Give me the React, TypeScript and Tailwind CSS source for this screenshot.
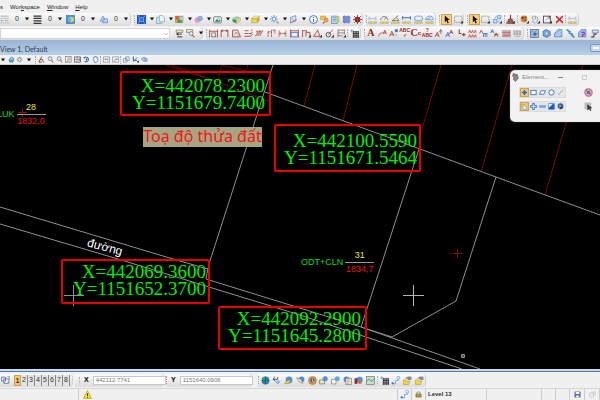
import { useState } from 'react';
import type { ReactNode } from 'react';
import clsx from 'clsx';

const BLUE = '#2f6fd0';
const SKY = '#8fc1f0';
const RED = '#b03a3a';
const DARK = '#333333';
const YELLOW = '#e8c53a';

const ruler = <path d="M1 12h14v3H1z" fill="#d9cf6a" stroke="#8a8240" strokeDasharray="1 1.5" />;
const dropMark = <path d="M11 15h5v-5z" fill={DARK} />;

// 16x16 drawings for the tool buttons
const icons: Record<string, ReactNode> = {
  'Line style': <path d="M1 2h14M1 6h3m2 0h4m2 0h3M1 10h5m3 0h6M1 14h2m2 0h2m2 0h2m2 0h2" stroke="#777" />,
  'Line weight': <path d="M1 2h14M1 6h14M1 10.500h14M1 15h14" stroke="#333" strokeWidth="2.4" />,
  'Color': <><rect x="1" y="1" width="14" height="14" fill="#4a90d9" stroke="#2b5fa0" /><circle cx="9" cy="8" r="5" fill="#f3cf4b" /><path d="M5 3c4 0 6 4 3 10-4-1-6-6-3-10" fill="#46c7ee" /></>,
  'Transparency': <><path d="M7 2l5 9H2z" fill="#cfe3fa" stroke={BLUE} /><rect x="7" y="7" width="8" height="7" fill="#bcd7f7" fillOpacity=".7" stroke={BLUE} /></>,
  'Models': <><rect x="0" y="0" width="16" height="16" fill="#1d56c8" /><rect x="4" y="5" width="8" height="7" fill="#2d6be0" stroke="#9cc4ff" /><path d="M2 2h2M12 2h2M2 14h2M12 14h2" stroke="#fff" /></>,
  'References': <><path d="M1 4h9v11H1z" fill="#cfeaf2" stroke="#5b8fa5" /><path d="M6 1h6l3 3v8H6z" fill="#eaf6fb" stroke="#6a8fa0" /></>,
  'Raster': <><rect x="1" y="2" width="13" height="11" fill="#f0a04a" stroke="#8a7a50" /><path d="M1 2h6v6H1z" fill="#e4573d" /><path d="M4 8h8v6H4z" fill="#4aa04a" /><path d="M9 3h6v6H9z" fill="#9ad0f0" /></>,
  'Point cloud': <><circle cx="6" cy="9" r="5" fill="#dba2cf" /><circle cx="11" cy="6" r="4" fill="#8fb4ea" stroke="#7a77b5" /></>,
  'Saved views': <><rect x="1" y="3" width="14" height="11" rx="2" fill="#e8eef2" stroke="#444" /><path d="M3 12l4-5 3 3 3-2v4z" fill="#2f8a4a" /><circle cx="10" cy="6" r="2" fill={SKY} /></>,
  'Levels': <><path d="M1 5l8-3 6 3-7 3z" fill="#8fd48a" /><path d="M1 6l7 3v6l-7-3z" fill="#2f9a4a" /><path d="M8 9l7-4v6l-7 4z" fill="#e8d28a" stroke="#999" strokeWidth=".6" /></>,
  'Cells': <><path d="M1 6l5-4h9l-4 4z" fill="#fff0a0" stroke="#a08a30" strokeWidth=".7" /><path d="M1 6h10v8H1z" fill="#ecd457" stroke="#a08a30" strokeWidth=".7" /><path d="M11 6l4-4v8l-4 4z" fill="#c7a933" /></>,
  'AccuDraw': <><path d="M7 0v14M0 7h14M2 2l10 10M12 2L2 12" stroke="#5f9fe6" strokeWidth="1.6" /><circle cx="7" cy="7" r="3" fill="#fff" stroke={BLUE} /><path d="M12 12l3 3" stroke="#b8862f" strokeWidth="2" /></>,
  'Auxiliary': <><path d="M3 4l9-3v9l-9 4z" fill="#dbe9fb" stroke={BLUE} /><path d="M2 14L14 8M5 6l6 6" stroke={RED} /></>,
  'Information': <><circle cx="8" cy="8" r="7" fill="#fff" stroke={BLUE} strokeWidth="1.6" /><path d="M8 7v5M8 3.500v2" stroke={BLUE} strokeWidth="2" /></>,
  'Find': <><path d="M1 2h9v6H1z" fill="#f5c742" stroke="#c08d20" /><circle cx="11" cy="9" r="3.500" fill="#f7a93c" stroke="#b8662a" /><path d="M8 12l-3 3" stroke="#a05a20" strokeWidth="2" /></>,
  'Properties': <><path d="M1 2h10v13H1z" fill="#cfe1f5" stroke="#557" /><path d="M3 5h6M3 8h6M3 11h6" stroke={BLUE} /><path d="M11 2h4v12h-4z" fill="#b6cf5a" /></>,
  'Details': <><path d="M5 0v16M11 0v16M0 5h16M0 11h16" stroke="#8a7ab0" /><rect x="3" y="3" width="10" height="10" fill="#6c8ee0" stroke="#5b5b9a" /></>,
  'Popset': <><circle cx="8" cy="8" r="5" fill="#5a2a2a" /><path d="M2 2l12 12M14 2L2 14M8 0v16M0 8h16" stroke="#a8322f" strokeWidth="1.600" /></>,
  'Distance': <><path d="M2 6h12M2 3v6M14 3v6" stroke="#4f8be0" strokeDasharray="3 1" />{ruler}</>,
  'Radius': <><path d="M1 9c2-8 10-9 13 0M8 8l4-5" stroke={DARK} fill="none" />{ruler}</>,
  'Angle': <><path d="M13 1L2 10h12M9 5c3 1 4 3 4 5" stroke={DARK} fill="none" />{ruler}</>,
  'Length': <><path d="M1 5h14M1 2v6M15 2v6" stroke={BLUE} strokeWidth="1.800" />{ruler}</>,
  'Area': <><rect x="1" y="2" width="14" height="8" rx="3" fill="#e4efff" stroke={BLUE} />{ruler}</>,
  'Volume': <><path d="M1 8c0-4 6-7 9-6s6 3 4 7z" fill="#e4efff" stroke={BLUE} /><path d="M3 8l8-4" stroke={BLUE} />{ruler}</>,
  'Element selection': <path d="M5 1v12l3-3 2 5 2-1-2-5h4z" fill="#111" />,
  'Fence': <><path d="M1 2h13v11H1z" fill="none" stroke="#555" strokeDasharray="2 1" />{dropMark}</>,
  'Manipulate': <><path d="M8 1h6v5H8zM1 8h6v6H1z" fill="#cfe1fa" stroke={BLUE} /><path d="M6 2L3 6M13 8l-4 4" stroke={BLUE} />{dropMark}</>,
  'Drop': <><path d="M7 0h2v7H7z" fill="#8a3030" /><path d="M5 7h6l3 8H1z" fill="#9c5a5a" stroke="#633" />{dropMark}</>,
  'Change attributes': <><circle cx="7" cy="7" r="6" fill="#d9822b" /><circle cx="5" cy="5" r="1.800" fill="#5a2a10" /><circle cx="9" cy="9" r="2" fill="#3a8a3a" /><circle cx="10" cy="4" r="1.800" fill="#e03030" />{dropMark}</>,
  'Groups': <><path d="M2 2h6v5H2z" fill="#e9e2b0" stroke="#998" /><path d="M8 3c6 0 5 8 1 10M3 9c0 3 2 5 5 5" stroke={BLUE} fill="none" />{dropMark}</>,
  'Modify': <><rect x="1" y="2" width="12" height="12" fill="#f4f4f4" stroke="#444" strokeWidth="1.500" /><path d="M5 10l7-7M8 3h4v4" stroke="#444" fill="none" />{dropMark}</>,
  'Delete': <path d="M2 2l12 12M14 2L2 14" stroke="#d8232a" strokeWidth="2.600" />,

  'Match': <><path d="M2 2h12v4H2z" fill="#f3eec0" stroke="#555" /><path d="M3 9h9M3 9l3-2M3 9l3 2M4 14h9" stroke="#222" strokeWidth="1.600" fill="none" /></>,
  'Change text': <><path d="M1 1h11v5H1z" fill="#f3eec0" stroke="#555" /><circle cx="9" cy="8" r="3.500" fill="#d7e9fa" stroke="#555" /><path d="M11 11l4 4" stroke="#a66b2a" strokeWidth="2" /></>,
  'Dimension element': <><path d="M1 1v14M15 1v14M1 4h14" stroke={RED} strokeWidth="1.500" /><rect x="5" y="7" width="7" height="7" fill="none" stroke="#444" /></>,
  'Linear dimension': <path d="M2 2v12M14 2v12M2 3h12M5 1L2 3l3 2M11 1l3 2-3 2" stroke={RED} strokeWidth="1.500" fill="none" />,
  'Angular dimension': <><path d="M1 2h9l5 12H1z" fill="none" stroke={RED} strokeWidth="1.500" /><path d="M4 5l8 7M3 11c2-4 5-5 8-4" stroke="#776" fill="none" /></>,
  'Ordinate': <path d="M1 3h7M1 8h7M1 13h9M12 3l3-2M9 8h4l2-3M10 13c3 0 4-2 5-4" stroke={RED} strokeWidth="1.500" fill="none" />,
  'Chamfer': <path d="M1 13L5 4v8l4-9v9l5-10M2 4h12" stroke={RED} strokeWidth="1.400" fill="none" strokeDasharray="4 1" />,
  'Perpendicular': <path d="M1 5h7V2h7M2 5v9M8 5v9M14 2v7" stroke={RED} strokeWidth="1.400" fill="none" strokeDasharray="5 1" />,
  'Size dimension': <path d="M2 2v12M14 2v12M2 8h12M5 6L2 8l3 2M11 6l3 2-3 2" stroke={RED} fill="none" />,
  'Box dimension': <><path d="M1 1v14M15 1v14M1 3h14" stroke={RED} strokeWidth="1.400" /><path d="M2 6h12v8H2z" fill="#e5eefc" stroke="#4e6fb0" strokeWidth="1.500" /></>,
  'Chain dimension': <><path d="M1 2v12M7 5v8M1 3h7v3h6v7" stroke={RED} strokeWidth="1.500" fill="none" />{dropMark}</>,
  'Angle size': <><path d="M9 1L1 13h12M8 2l4 10" stroke={RED} strokeWidth="1.500" fill="none" />{dropMark}</>,
  'Diameter': <><circle cx="6" cy="10" r="4" fill="none" stroke="#444" strokeWidth="1.500" /><path d="M6 10l8-9" stroke={RED} strokeWidth="1.500" />{dropMark}</>,
  'Label line': <><path d="M1 2h13M1 7h13M1 12h9M2 1v13M13 1v9" stroke="#866" strokeWidth="1.300" />{dropMark}</>,
  'Pattern': <><path d="M5 5h11M5 8h11M5 11h11M5 14h11M6 4v12M9 4v12M12 4v12M15 4v12" stroke="#222" strokeWidth="1.300" /><path d="M1 3h5M3 1v5" stroke={BLUE} /></>,
  'Note': <><path d="M1 13c3-9 4-3 7-7" stroke={RED} fill="none" strokeWidth="1.500" /><path d="M9 9l3-7 3 7M10 7h4" stroke={RED} fill="none" strokeWidth="1.500" /></>,
  'Edit text': <><path d="M1 13l4-9 4 9M3 10h5" stroke={RED} fill="none" strokeWidth="1.500" /><path d="M11 1h4v4h-4zM11 8l3 4" fill={BLUE} stroke={BLUE} /></>,
  'Display text attributes': <><path d="M2 14L6 6l3 8M4 11h4" stroke={RED} fill="none" strokeWidth="1.500" /><path d="M9 6l3-5 3 5M12 1v8" stroke="#444" fill="none" /></>,
  'Match text': <><path d="M1 14l4-8 3 8M3 11h4" stroke={BLUE} fill="none" strokeWidth="1.500" /><path d="M8 9l3-7 3 7M9 6h4" stroke={RED} fill="none" strokeWidth="1.500" /></>,
  'Increment': <path d="M4 1v7h4M9 10h6M12 7v6" stroke={RED} strokeWidth="2" fill="none" />,
  'Copy increment': <path d="M1 7l2-5 2 5M6 7l2-5 2 5M11 7l2-5 2 5M1 15l2-5 2 5M6 15l2-5 2 5M11 15l2-5 2 5" stroke={RED} fill="none" strokeWidth="1.300" />,
  'Enter data': <><path d="M1 8l3-6 3 6" stroke={RED} fill="none" strokeWidth="1.500" /><path d="M8 8v6M11 8v6M14 8v6M8 8h7" stroke={BLUE} strokeWidth="1.500" /></>,
  'Copy data': <><path d="M1 7l3-6 3 6M2 5h4" stroke={BLUE} fill="none" strokeWidth="1.500" /><path d="M8 14l3-7 3 7M7 10h8" stroke={RED} fill="none" strokeWidth="1.500" /></>,
  'Fill data': <><rect x="1" y="3" width="14" height="11" fill="#d9b0b0" stroke="#999" /><path d="M1 6h14M3 9h3M7 9h3M11 9h3M2 12h12" stroke={RED} /></>,
  'Auto fill': <path d="M1 3h3v3H1zM6 3h3v3H6zM11 3h3v3h-3zM1 8h3v2H1zM6 8h3v2H6zM11 8h3v2h-3zM3 13h10" fill="#ddd" stroke="#888" />,
  'Create region': <><rect x="1" y="1" width="14" height="14" fill="#9cc3ea" stroke="#446" /><path d="M2 6l5-4M2 12L12 2M6 14l8-8" stroke={BLUE} /><circle cx="9" cy="9" r="3" fill="#567" /></>,
  'Hatch area': <><path d="M2 4l5-3 7 3 1 7-6 4-7-3z" fill="#6fb0ee" stroke="#346" /><circle cx="8" cy="8" r="3" fill="#cfe5fa" stroke={BLUE} /></>,
  'Cross hatch': <><path d="M1 14V8l6-7h7v13z" fill="#94c2f2" stroke="#3c6aa8" /><path d="M3 13L13 3M8 13l5-5" stroke="#e6f1fd" /></>,
  'Linear pattern': <path d="M1 1l6 4-1 2 5 2-1 2 5 4" stroke="#3d93e0" strokeWidth="3" fill="none" />,
  'Pattern area': <><path d="M1 14V6l5-5h8v13z" fill="#94c2f2" stroke="#3c6aa8" /><path d="M6 6h5v4H8v4" stroke="#b12cc0" strokeWidth="2" fill="none" /></>,
  'Show pattern': <><path d="M4 2h11v5H4z" fill="#cfe5fa" stroke="#447" /><path d="M2 14h5V9h5" stroke="#446" strokeWidth="2" fill="none" /></>,

  'Update view': <path d="M9 1l-4 7h5l3 7M5 8l-3 6h7" stroke="#8a3a3a" strokeWidth="2" fill="none" />,
  'Zoom in': <><circle cx="7" cy="6" r="4.500" fill="#dcebfa" stroke="#667" strokeWidth="1.500" /><path d="M10 9l4 6" stroke="#b8742c" strokeWidth="2.500" /></>,
  'Window area': <><rect x="1" y="1" width="13" height="13" fill="#f6f0dd" stroke="#777" strokeWidth="1.500" /><circle cx="9" cy="7" r="3" fill="#dcebfa" stroke={BLUE} /><path d="M7 10l-3 4" stroke="#b8742c" strokeWidth="2" /></>,
  'Fit view': <><path d="M1 2h14v12H1z" fill="#f2f2f2" stroke="#445" strokeWidth="1.600" /><path d="M1 8h14M7 2v12M10 5h3v6h-3" stroke="#445" fill="none" /></>,
  'Rotate view': <><path d="M3 4c4-4 11 0 9 6-2 4-6 4-8 2" stroke={BLUE} strokeWidth="2.500" fill="none" /><path d="M0 3l6-1-2 5z" fill={BLUE} /><path d="M7 5l3 3-3 4z" fill="#27407a" /></>,
  'Pan view': <path d="M3 8V4h2V2h2V1h2v1h2v2h2v7l-3 4H6z" fill="#f4f8ff" stroke={BLUE} strokeWidth="1.600" />,
  'View previous': <><path d="M1 2h14v12H1z" fill="#f7f7f7" stroke="#778" strokeWidth="1.400" /><path d="M4 8h5M4 8l3-3M11 5v6" stroke="#556" strokeWidth="1.400" /></>,
  'View next': <><path d="M1 2h14v12H1z" fill="#f7f7f7" stroke="#778" strokeWidth="1.400" /><path d="M12 8H7M12 8L9 5M4 11h4" stroke="#556" strokeWidth="1.400" /></>,
  'Copy view': <><path d="M1 6h8v8H1zM6 2h8v8H6z" fill="#eef3fa" stroke="#66788f" strokeWidth="1.400" /></>,
  'Clip volume': <><path d="M3 1v9h8" stroke="#27407a" strokeWidth="2" fill="none" /><path d="M3 13L12 3M9 9l5 5" stroke={BLUE} strokeWidth="2" />{dropMark}</>,
  'Clip mask': <><path d="M2 4h8l4 3v5H6L2 9z" fill="#dce8f8" stroke="#56749c" strokeWidth="1.400" /><circle cx="9" cy="8" r="3" fill="#a5c8f0" stroke={BLUE} /></>,
  'Display style': <><path d="M2 9l6-7 6 4-3 8H4z" fill="#4f9fe0" stroke="#2f5f90" /><path d="M5 8l4-4 3 3z" fill="#d8ecfb" /></>,
  'View attributes': <><circle cx="8" cy="8" r="4" fill="#e7f0f2" stroke="#555" strokeWidth="1.500" /><path d="M8 1v3M8 12v3M1 8h3M12 8h3M3 3l2 2M13 3l-2 2M3 13l2-2M13 13l-2-2" stroke="#689" /></>,

  'Individual': <><path d="M8 2v12M2 8h12" stroke={BLUE} strokeWidth="3" /><rect x="5" y="5" width="6" height="6" fill={BLUE} /></>,
  'Block': <rect x="2" y="3" width="12" height="10" fill="#fff" stroke={BLUE} strokeWidth="2" />,
  'Shape': <path d="M5 4h10l-4 8H1z" fill="#fff" stroke={BLUE} strokeWidth="2" />,
  'Circle': <circle cx="8" cy="8" r="6" fill="#fff" stroke={BLUE} strokeWidth="2" />,
  'Line': <path d="M2 14L14 2" stroke="#888" strokeWidth="1.500" />,
  'New set': <><path d="M2 3h6v5H2z" fill="#f8e5b0" stroke="#a77b30" /><path d="M5 14l-3-5 3-1 2-4 3 3 4 1-2 7z" fill="#e8eff5" stroke="#678" /></>,
  'Add': <path d="M6 1h4v5h5v4h-5v5H6v-5H1V6h5z" fill="#d5e7fb" stroke={BLUE} strokeWidth="2" />,
  'Subtract': <path d="M1 6h14v4H1z" fill="#80b3f0" stroke={BLUE} />,
  'Invert': <><rect x="1" y="1" width="14" height="14" fill="#1759c8" /><path d="M2 2h9l-9 9z" fill="#f3f8ff" /></>,
  'Clear': <><circle cx="8" cy="7" r="6" fill="#356ba8" stroke="#223" /><path d="M6 3l3 5-3 3z" fill="#e4eefa" /><path d="M8 8v7l3-3h4z" fill="#123" /></>,
  'Disable handles': <><circle cx="8" cy="8" r="6.500" fill="#b7cdea" stroke="#d66060" strokeWidth="2" /><path d="M5 5h6v6H5z" fill={BLUE} /><path d="M3 3l10 10" stroke="#d66060" strokeWidth="2" /></>,
  'Select all': <><rect x="1" y="1" width="12" height="12" fill="#bbb" /><path d="M6 4v11l3-3 2 4 2-1-2-4h4z" fill="#333" /></>,
  'Panel grip': <path d="M4 1l7 2 2 6-5 6-4-4 2-3-3-2z" fill="#888" stroke="#444" />,

  'View groups': <><path d="M1 2h7v7H1zM5 5h9v8H5z" fill="#e9eef8" stroke="#5a6a9a" strokeWidth="1.400" /><path d="M11 1h4v4" stroke="#5a6a9a" fill="none" /></>,
  'Globe': <><circle cx="8" cy="8" r="7" fill="#2f78d8" /><path d="M3 3l5-2 1 5-4 4-3-3zM10 6l4 1-2 6-3-2z" fill="#28b050" /><path d="M1 8h14M8 1v14" stroke="#134" strokeWidth=".8" /></>,
  'Place mark': <><path d="M2 6h8V2M5 1L2 6l4 3" stroke="#445" strokeWidth="1.500" fill="none" /><path d="M6 10l5-3 4 3-5 5z" fill="#8eb8ec" /></>,
  'Export': <><circle cx="9" cy="7" r="6" fill="#4f8fdb" /><path d="M1 14l5-6 6-1-3 6z" fill="#eed655" stroke="#9a8226" /></>,
  'Capture': <><circle cx="10" cy="6" r="5" fill="#4f8fdb" /><path d="M1 3l8 3 3 7-6-2z" fill="#eee7c0" stroke="#777" /></>,
  'Sync': <><circle cx="8" cy="8" r="7" fill="#ee9b33" stroke="#a35d14" /><circle cx="8" cy="8" r="4" fill="#3567a8" /><path d="M8 5v5h3" stroke="#fff" fill="none" /></>,
  'Open map': <><path d="M1 7h9v7H1z" fill="#f5e6a5" stroke="#555" /><circle cx="11" cy="5" r="4.500" fill="#4f8fdb" /><path d="M3 6l4-4v3z" fill="#eed655" /></>,
  'Send map': <><path d="M1 6h8v8H1z" fill="#fff" stroke="#555" /><circle cx="11" cy="5" r="4.500" fill="#64a4e6" /><path d="M7 11l6-1-3 4z" fill="#eed655" /></>,
  'Map report': <><circle cx="6" cy="6" r="5" fill="#4f8fdb" /><path d="M5 4h10v11H5z" fill="#fff6d5" stroke="#555" /><path d="M7 7h6M7 10h6M7 13h4" stroke="#777" /></>,
  'Map tour': <><circle cx="10" cy="7" r="5.500" fill="#4f8fdb" /><path d="M1 4h5v10H1z" fill="#8a3030" /><path d="M8 8h5v6H8z" fill="#d5712f" /></>,
  'Map sheet': <><rect x="1" y="1" width="14" height="14" fill="#c8dfb8" stroke="#567" /><path d="M1 10l5-5 4 5 5-6" stroke="#4a7fc0" strokeWidth="1.500" fill="none" /></>,
  'Nodes': <><path d="M3 14h5V8h5V3" stroke="#7aa7e4" strokeWidth="1.600" fill="none" /><circle cx="3" cy="13" r="2" fill={BLUE} /><circle cx="13" cy="3" r="2.500" fill="#fff" stroke={BLUE} /></>,
  'Folder': <><path d="M1 7h4l1 2h6l-2 6H1z" fill="#f6d83f" stroke="#b1922a" /><path d="M8 1h7v6H8z" fill="#888" /><path d="M5 5l3-3" stroke="#333" strokeWidth="1.500" /></>,
  'Warning': <><path d="M8 1l7 14H1z" fill="#f9dd1c" stroke="#a89000" /><path d="M8 6v5M8 12.500v1.500" stroke="#222" strokeWidth="1.600" /></>,
  'Lock': <><path d="M4 8V5c0-4 8-4 8 0v3" fill="none" stroke="#777" strokeWidth="2" /><path d="M2 7h12v7H2z" fill="#b09e2b" stroke="#5f5618" /></>,
  'Save': <><rect x="1" y="1" width="14" height="14" rx="1" fill="#65719c" /><path d="M4 2h8v5H4zM5 10h6v5H5z" fill="#f3f4fa" /></>,
  'Fence state': <path d="M2 4h8v10H2zM10 2h4v6h-4" fill="none" stroke="#aaa" strokeWidth="1.500" strokeDasharray="3 1" />,
};

function Icon({ name, small }: { name: string; small?: boolean }) {
  return (
    <svg viewBox="0 0 16 16" fill={YELLOW} aria-hidden="true" className={clsx('shrink-0', small ? 'size-[7px]' : 'size-[9px]')}>
      {icons[name]}
    </svg>
  );
}

function Tool({ name, small, active }: { name: string; small?: boolean; active?: boolean }) {
  return (
    <button
      type="button"
      aria-label={name}
      className={clsx(
        'flex shrink-0 items-center justify-center',
        small ? 'size-2' : 'size-[11px]',
        active && 'border border-[#c9a25b] bg-[#fbcf7e]'
      )}
    >
      <Icon name={name} small={small} />
    </button>
  );
}

function Caret() {
  return (
    <svg viewBox="0 0 8 8" aria-hidden="true" className="size-1 shrink-0">
      <path d="M0 1h8L4 7z" fill="#111" />
    </svg>
  );
}

function DropTool({ name, small }: { name: string; small?: boolean }) {
  return (
    <button type="button" aria-haspopup="menu" aria-label={name} className={clsx('flex shrink-0 items-center gap-1', small ? 'w-[18px]' : 'w-[19px]')}>
      <Icon name={name} small={small} />
      <Caret />
    </button>
  );
}

function AttributePicker({ name }: { name: string }) {
  return (
    <button type="button" aria-haspopup="listbox" aria-label={name} className="flex w-[33px] shrink-0 items-center justify-between pr-1">
      <Icon name={name} />
      <span>0</span>
      <Caret />
    </button>
  );
}

function Group({ children, className }: { children: ReactNode; className?: string }) {
  return (
    <div role="toolbar" className={clsx('flex h-[13px] shrink-0 items-center rounded-r-sm border-r border-[#cfcfcf] bg-linear-to-b from-[#fbfbfb] to-[#dcdcdc]', className)}>
      {children}
    </div>
  );
}

function Grip() {
  return <span className="h-2 w-0 shrink-0 border-l border-dotted border-[#a8a8a8]" />;
}

const mainTools = ['Models', 'References', 'Raster', 'Point cloud', 'Saved views', 'Levels', 'Cells', 'AccuDraw', 'Auxiliary'];
const infoTools = ['Information', 'Find', 'Properties', 'Details', 'Popset'];
const measureTools = ['Distance', 'Radius', 'Angle', 'Length', 'Area', 'Volume'];
const dimensionTools = ['Dimension element', 'Linear dimension', 'Angular dimension', 'Ordinate', 'Chamfer', 'Perpendicular', 'Size dimension', 'Box dimension', 'Chain dimension', 'Angle size', 'Diameter', 'Label line'];
const patternTools = ['Create region', 'Hatch area', 'Cross hatch', 'Linear pattern', 'Pattern area', 'Show pattern', 'Cross hatch'];
const mapTools = ['Globe', 'Place mark', 'Export', 'Capture', 'Sync', 'Open map', 'Send map', 'Map report', 'Map tour', 'Map sheet'];

function Letters({ label, children }: { label: string; children: ReactNode }) {
  return (
    <button type="button" aria-label={label} className="flex w-[11px] shrink-0 items-center justify-center font-bold text-[#a01c1c]">
      {children}
    </button>
  );
}

function TopToolbars() {
  return (
    <header className="bg-[#f0f0f0]">
      <nav className="flex h-3 items-center gap-[7px] pt-0.5 text-[6px] text-[#222]">
        <button type="button">s</button>
        <button type="button">Wor<u>k</u>space</button>
        <button type="button"><u>W</u>indow</button>
        <button type="button"><u>H</u>elp</button>
      </nav>

      <div className="flex h-[14px] items-center gap-[3px] overflow-hidden text-[7px] text-[#333]">
        <Group className="w-[131px]">
          <AttributePicker name="Line style" />
          <AttributePicker name="Line weight" />
          <AttributePicker name="Color" />
          <AttributePicker name="Transparency" />
        </Group>
        <Group className="w-[229px]">
          <Grip />
          <div className="ml-0.5 flex">
            {mainTools.map(name => <DropTool key={name} name={name} />)}
          </div>
          {infoTools.map(name => <Tool key={name} name={name} />)}
        </Group>
        <Group className="w-[70px] justify-between">
          <Grip />
          {measureTools.map(name => <Tool key={name} name={name} />)}
        </Group>
        <Group className="w-[25px] gap-px">
          <Grip />
          <Tool name="Element selection" active />
          <Tool name="Fence" />
        </Group>
        <Group className="w-[112px] justify-between">
          <Grip />
          <Tool name="Element selection" active />
          <Tool name="Fence" />
          <Tool name="Manipulate" />
          <Grip />
          <Tool name="Drop" />
          <Grip />
          <Tool name="Change attributes" />
          <Tool name="Groups" />
          <Tool name="Modify" />
          <Tool name="Delete" />
          <Grip />
          <Tool name="Distance" />
        </Group>
      </div>

      <div className="flex h-[14px] items-center gap-[3px] overflow-hidden text-[6px]">
        <Group className="w-[203px]">
          <div className="relative flex">
            <select aria-label="Text style" className="h-[11px] w-[170px] appearance-none border border-[#d4d4d4] bg-white" />
            <svg viewBox="0 0 8 8" className="pointer-events-none absolute top-1 right-0.5 size-1">
              <path d="M0 2l4 4 4-4" fill="none" stroke="#888" />
            </svg>
          </div>
          <div className="ml-1 flex gap-px">
            <Tool name="Match" />
            <DropTool name="Change text" />
          </div>
        </Group>
        <Group className="w-[155px] justify-between">
          <Grip />
          {dimensionTools.map(name => <Tool key={name} name={name} />)}
          <Grip />
          <Tool name="Pattern" />
        </Group>
        <Group className="w-[160px] justify-between">
          <Grip />
          <Letters label="Place text"><span className="font-['Liberation_Serif',serif] text-[10px] leading-none">A</span></Letters>
          <Tool name="Note" />
          <Tool name="Edit text" />
          <Letters label="Spell checker"><span className="text-[5px] leading-none">ABC<br />✓</span></Letters>
          <Letters label="Change case"><span className="font-['Liberation_Serif',serif] text-[10px] leading-none">C</span><span>c</span></Letters>
          <Letters label="Display attributes"><span className="text-[5px] leading-none">?<br />ABC</span></Letters>
          <Tool name="Display text attributes" />
          <Tool name="Match text" />
          <Tool name="Increment" />
          <Tool name="Copy increment" />
          <Tool name="Enter data" />
          <Tool name="Copy data" />
          <Tool name="Fill data" />
          <Tool name="Auto fill" />
        </Group>
        <Group className="gap-px">
          <Grip />
          {patternTools.map((name, i) => <Tool key={i} name={name} />)}
        </Group>
      </div>
    </header>
  );
}

function ViewHeader() {
  return (
    <>
      <div className="flex h-[15px] items-center justify-between bg-linear-to-b from-[#98b4d2] to-[#b8d0ea] font-['Lato',sans-serif] text-[7px] text-[#2b3a4c]">
        <h1 className="pt-1">View 1, Default</h1>
        <button type="button" aria-label="Minimize" className="flex h-2 w-2.5 items-center justify-center rounded-l-xs border border-r-0 border-[#8199b5] bg-[#c3d6ea]">
          <span className="h-0.5 w-1.5 bg-white" />
        </button>
      </div>
      <div role="toolbar" className="flex h-[10px] items-center gap-px overflow-hidden border-b border-[#ccc] bg-[#f0f0f0]">
        <span className="flex w-1.5 pl-px"><Caret /></span>
        <Tool name="Display style" small />
        <DropTool name="View attributes" small />
        <Grip />
        <Tool name="Update view" small />
        <Tool name="Zoom in" small />
        <Tool name="Zoom in" small />
        <Tool name="Window area" small />
        <Tool name="Fit view" small />
        <Tool name="Rotate view" small />
        <Tool name="Pan view" small />
        <Grip />
        <Tool name="View previous" small />
        <Tool name="View next" small />
        <Grip />
        <Tool name="Copy view" small />
        <Tool name="Clip volume" small />
        <Tool name="Clip mask" small />
      </div>
    </>
  );
}

const coordinates = [
  { x: 'X=442078.2300', y: 'Y=1151679.7400', place: 'left-[120px] top-[6px]', box: 'w-[151px] h-[45px] pt-1 pr-1' },
  { x: 'X=442100.5590', y: 'Y=1151671.5464', place: 'left-[274px] top-[59px]', box: 'w-[147px] h-[48px] pt-1.5 pr-0.5' },
  { x: 'X=442069.3600', y: 'Y=1151652.3700', place: 'left-[61px] top-[194px]', box: 'w-[149px] h-[45px] pt-0.5 pr-0.5' },
  { x: 'X=442092.2900', y: 'Y=1151645.2800', place: 'left-[218px] top-[241px]', box: 'w-[149px] h-[44px] pt-0.5 pr-1' },
];

function Parcel({ use, number, area, className }: { use: string; number: string; area: string; className: string }) {
  return (
    <div className={clsx('absolute flex items-center gap-0.5 text-[9px] leading-none text-[#00dc28]', className)}>
      <span>{use}</span>
      <div className="flex w-[29px] flex-col items-center">
        <span className="pb-0.5 text-[#e6e632]">{number}</span>
        <span className="w-full border-t border-[#999] pt-0.5 text-center text-[#e0141e]">{area}</span>
      </div>
    </div>
  );
}

function ElementPanel() {
  return (
    <section className="absolute top-[6px] right-0 flex h-[50px] w-[89px] flex-col rounded-l bg-[#f2f2f2] shadow-[0_0_1px_1px_#ffffff]">
      <div className="flex h-3 items-center text-[6px] text-[#888]">
        <Icon name="Panel grip" />
        <h2 className="ml-0.5 flex-1">Element...</h2>
        <button type="button" aria-label="Minimize" className="mr-[19px] h-px w-[5px] bg-[#888]" />
        <button type="button" aria-label="Maximize" className="mr-[13px] size-[5px] border border-[#ccc]" />
      </div>
      <div className="mt-1 flex flex-1 justify-between pr-1.5 pl-2">
        <div className="flex flex-col gap-[3px]">
          <div className="flex h-[11px] items-center border border-[#dcdcdc] bg-[#e6e6e6]">
            <button type="button" aria-label="Individual" className="flex size-[9px] items-center justify-center border border-[#c9a25b] bg-[#fbc66a]"><Icon name="Individual" small /></button>
            {['Block', 'Shape', 'Circle', 'Line'].map(name => (
              <button key={name} type="button" aria-label={name} className="flex w-[9px] justify-center"><Icon name={name} small /></button>
            ))}
          </div>
          <div className="flex h-[11px] items-center border border-[#dcdcdc] bg-[#e6e6e6]">
            <button type="button" aria-label="New set" className="flex size-[9px] items-center justify-center border border-[#c9a25b] bg-[#fbc66a]"><Icon name="New set" small /></button>
            {['Add', 'Subtract', 'Invert', 'Clear'].map(name => (
              <button key={name} type="button" aria-label={name} className="flex w-[9px] justify-center"><Icon name={name} small /></button>
            ))}
          </div>
        </div>
        <div className="flex flex-col gap-[3px]">
          <Tool name="Disable handles" />
          <Tool name="Select all" />
        </div>
      </div>
    </section>
  );
}

function Drawing() {
  return (
    <main className="relative flex-1 overflow-hidden bg-black">
      <svg className="absolute inset-0 size-full" fill="none">
        <g stroke="#8c0a0a">
          <path d="M166 0l52 17 50 19M172 0l46 17M222 0l-6 22M222 0l24 6 2-6" stroke="#6e0808" />
          <path d="M315 0l-11 41M357 0l-14 56M441 0l-21 71M512 0l-31 107M583 0l-38 130" stroke="#780808" />
        </g>
        <g stroke="#8e8e8e">
          <path d="M273 0L209 199M208 203l-2 11" />
          <path d="M265 27l155 57 76 28 104 38" />
          <path d="M419 84l-58 178M496 112l-40 124-64 36-31-10" />
          <path d="M0 142l173 52 35 10" />
          <path d="M206 214l155 48 119 42" />
          <path d="M0 159l118 35 182 56 162 54" />
          <path d="M64 230.500h20M73.500 220v21" />
          <circle cx="463" cy="291" r="1.500" strokeWidth="1.500" />
        </g>
        <path d="M403 230.500h21M413.500 220v21" stroke="#b4b4b4" />
        <path d="M453 188.500h9M457.500 184v9M18 47.500h9M22.500 43v9" stroke="#8c0e0e" />
      </svg>

      <p className="absolute top-[173px] left-[87px] rotate-[15deg] text-[12px] leading-[18px] text-white">đường</p>
      <Parcel use="LUK" number="28" area="1832,0" className="top-[38px] left-[-3px]" />
      <Parcel use="ODT+CLN" number="31" area="1834,7" className="top-[186px] left-[301px]" />

      {coordinates.map(c => (
        <div
          key={c.x}
          className={clsx("absolute rounded-xs border-2 border-[#e60000] text-right font-['Liberation_Serif',serif] text-[19px] leading-[17px] text-[#00ee00]", c.place, c.box)}
        >
          <p>{c.x}</p>
          <p>{c.y}</p>
        </div>
      ))}

      <p className="absolute top-[62px] left-[143px] h-5 w-[119px] bg-[#a5a582] text-center font-['Noto_Sans',sans-serif] text-[16px] leading-[18px] whitespace-nowrap text-[#f81414]">
        Toạ độ thửa đất
      </p>
      <ElementPanel />
    </main>
  );
}

function StatusBars() {
  const [view, setView] = useState(1);
  const [x, setX] = useState('442112.7741');
  const [y, setY] = useState('1151640.0906');

  return (
    <footer className="border-t-2 border-[#c5d9ee] bg-[#f0f0f0] text-[6px] text-[#333]">
      <div className="flex h-[17px] items-center gap-0.5 overflow-hidden border-t border-[#4a7f96]">
        <Group className="w-[73px] gap-[3px]">
          <Tool name="View groups" />
          <div className="flex text-[7px]">
            {[1, 2, 3, 4, 5, 6, 7, 8].map(n => (
              <button
                key={n}
                type="button"
                onClick={() => setView(n)}
                className={clsx('h-[11px] w-[7px] border-r border-[#888]', view === n ? 'border border-[#c9a25b] bg-[#fbc66a] font-bold' : 'bg-[#e4e4e4]')}
              >
                {n}
              </button>
            ))}
          </div>
        </Group>
        <Group className="w-[89px] gap-1">
          <span className="pl-1"><Grip /></span>
          <label htmlFor="coord-x" className="text-[7px] font-bold text-black">X</label>
          <input id="coord-x" value={x} onChange={e => setX(e.target.value)} className="h-[9px] w-[73px] border border-[#c8c8c8] bg-white px-0.5 text-[#777]" />
        </Group>
        <Group className="w-[86px] gap-1">
          <Grip />
          <label htmlFor="coord-y" className="text-[7px] font-bold text-black">Y</label>
          <input id="coord-y" value={y} onChange={e => setY(e.target.value)} className="h-[9px] w-[73px] border border-[#c8c8c8] bg-white px-0.5 text-[#777]" />
        </Group>
        <Group className="ml-1 w-[168px] justify-between">
          <Grip />
          {mapTools.map(name => <Tool key={name} name={name} />)}
          <Grip />
          <Tool name="Pattern" />
          <Tool name="Nodes" />
          <Tool name="Folder" />
          <Tool name="Folder" />
        </Group>
      </div>

      <div className="flex h-3 items-center border-t border-[#d8d8d8] *:h-full *:items-center *:border-r *:border-[#cccccc]">
        <span className="flex w-[79px]" />
        <span className="flex flex-1 pl-1"><Icon name="Warning" /></span>
        <span className="flex w-[14px] justify-center"><Icon name="Nodes" /></span>
        <span className="flex w-[14px] justify-center"><Icon name="Lock" small /></span>
        <span className="flex w-[61px] pl-0.5 font-bold">Level 13</span>
        <span className="flex w-[55px]" />
        <span className="flex w-[14px]" />
        <span className="flex w-[14px]" />
        <span className="flex w-[15px] justify-center"><Icon name="Save" small /></span>
        <span className="flex w-[15px] justify-center"><Icon name="Fence state" small /></span>
      </div>
    </footer>
  );
}

export default function App() {
  return (
    <div className="flex h-screen flex-col overflow-hidden bg-[#f0f0f0] font-['Liberation_Sans',Arial,sans-serif]">
      <TopToolbars />
      <ViewHeader />
      <Drawing />
      <StatusBars />
    </div>
  );
}
